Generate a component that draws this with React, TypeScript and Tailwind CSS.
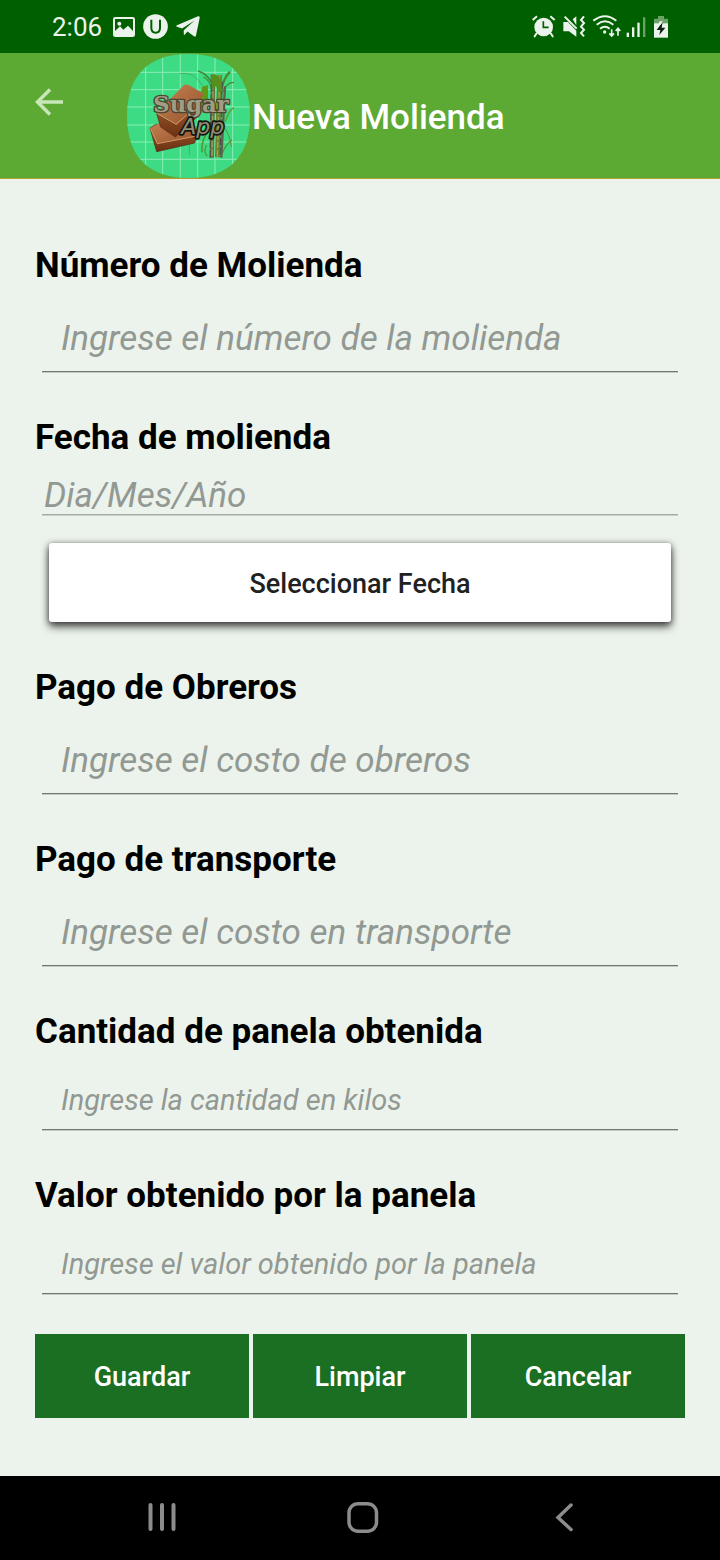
import { useState } from "react";

function SugarLogo() {
  return (
    <svg viewBox="51 27 369 372" className="h-[124px] w-[123px] shrink-0" role="img" aria-label="Sugar App">
      <defs>
        <clipPath id="squircle">
          <path d="M236 27C356 27 420 91 420 213S356 399 236 399 51 335 51 213 115 27 236 27Z" />
        </clipPath>
        <linearGradient id="panelaTop" x1="0" y1="0" x2="1" y2="1">
          <stop offset="0" stopColor="#c68354" />
          <stop offset="1" stopColor="#96522a" />
        </linearGradient>
        <linearGradient id="panelaSide" x1="0" y1="0" x2="0" y2="1">
          <stop offset="0" stopColor="#a9602f" />
          <stop offset="1" stopColor="#6a3113" />
        </linearGradient>
      </defs>
      <g clipPath="url(#squircle)">
        <rect x="51" y="27" width="369" height="372" fill="#3ddc84" />
        <path
          d="M107 27V399M158 27V399M211 27V399M263 27V399M315 27V399M368 27V399M51 82H420M51 134H420M51 186H420M51 240H420M51 291H420M51 343H420"
          stroke="#8decb6"
          strokeWidth="3"
          fill="none"
        />
        <g fill="none" stroke="#43a04c" strokeWidth="2">
          <path d="M208 86Q240 80 262 102Q284 124 292 150" />
          <path d="M238 270V330" />
          <path d="M264 78Q298 88 312 128" stroke="#3f8a36" strokeWidth="5" />
          <path d="M280 96Q300 104 306 136" stroke="#3f8a36" strokeWidth="4" />
          <path d="M360 80Q336 104 332 150" stroke="#4b8a2a" strokeWidth="7" />
          <path d="M372 112Q350 112 338 140" stroke="#4b8a2a" strokeWidth="4" />
          <path d="M372 188Q356 196 346 230" stroke="#5f9a30" strokeWidth="4" />
          <path d="M302 250Q272 280 276 322" stroke="#4f9a34" strokeWidth="5" />
          <path d="M290 300Q278 320 292 334" stroke="#4f9a34" strokeWidth="4" />
          <path d="M336 240Q362 270 364 306" stroke="#4f9a34" strokeWidth="3" />
          <path d="M366 284Q346 300 336 326" stroke="#4f9a34" strokeWidth="4" />
        </g>
        <path d="M276 126L294 120 294 160 276 206 266 180Z" fill="#5f9a16" />
        <g fill="none">
          <path d="M310 88L306 338" stroke="#66713f" strokeWidth="12" />
          <path d="M329 90L322 336" stroke="#6f8128" strokeWidth="14" />
          <path d="M345 124L334 338" stroke="#5e6048" strokeWidth="7" />
          <path d="M310 88L306 338M329 90L322 336" stroke="#9aa35e" strokeWidth="4" strokeDasharray="20 5" />
          <path d="M304 90L300 338M337 110L330 336" stroke="#4b4149" strokeWidth="3" strokeDasharray="24 4" />
        </g>
        <path d="M302 92L314 88 330 98 336 132 326 142 318 122 306 136Z" fill="#568f1e" />
        <path d="M318 168L330 180 328 206 314 196Z" fill="#78a018" />
        <path d="M134 240L120 250 140 320 254 294 262 262 210 224Z" fill="url(#panelaSide)" stroke="#552a12" strokeWidth="2" strokeLinejoin="round" />
        <path d="M120 250L164 226 262 258 250 276 142 296Z" fill="url(#panelaTop)" />
        <path d="M122 252L142 296 254 274" fill="none" stroke="#d09565" strokeWidth="3" strokeLinejoin="round" />
        <path d="M140 206L198 240 264 160 268 210 196 276 152 246Z" fill="url(#panelaSide)" stroke="#552a12" strokeWidth="2" strokeLinejoin="round" />
        <path d="M140 204L222 120Q230 116 240 122L282 146 264 178 200 240Z" fill="url(#panelaTop)" />
        <path d="M142 206L198 238 240 202" fill="none" stroke="#d09565" strokeWidth="3" strokeLinejoin="round" />
        <text
          x="243"
          y="200"
          textAnchor="middle"
          fontFamily="'DejaVu Serif', serif"
          fontWeight="700"
          fontSize="68"
          fill="#a19d85"
          stroke="#4b4630"
          strokeWidth="8"
          strokeLinejoin="round"
          paintOrder="stroke"
        >
          Sugar
        </text>
        <text
          x="278"
          y="268"
          textAnchor="middle"
          fontFamily="'DejaVu Sans', sans-serif"
          fontStyle="italic"
          fontSize="66"
          fill="#8f8c74"
          stroke="#15150f"
          strokeWidth="10"
          strokeLinejoin="round"
          paintOrder="stroke"
        >
          App
        </text>
      </g>
    </svg>
  );
}

function StatusBar() {
  return (
    <div className="flex h-[53px] items-center justify-between bg-[#006000] pr-[51px] pl-[52px] text-[#ecf3ec]">
      <div className="flex items-center">
        <span className="pt-px text-[26px] leading-8">2:06</span>
        <svg viewBox="339 51 66 60" className="ml-[11px] h-5 w-[22px]" aria-hidden="true">
          <path
            fillRule="evenodd"
            fill="currentColor"
            d="M346 51H398Q405 51 405 58V104Q405 111 398 111H346Q339 111 339 104V58Q339 51 346 51ZM345 57V93L360 79 370 89 384 77 399 93V57Z"
          />
          <circle cx="358" cy="71" r="6" fill="currentColor" />
        </svg>
        <svg viewBox="430 42 75 75" className="ml-2 h-[25px] w-[25px]" aria-hidden="true">
          <circle cx="467.500" cy="79.500" r="37" fill="currentColor" />
          <path d="M455 59V84Q455 98 468 98T481 84V59" fill="none" stroke="#006000" strokeWidth="6" />
        </svg>
        <svg viewBox="529 52 71 62" className="ml-2 h-[21px] w-6" aria-hidden="true">
          <path
            fill="currentColor"
            d="M532 79L594 53Q600 52 599 58L588 110Q586 115 581 111L563 98 554 108Q552 108 552 104V94L584 65 547 89 532 84Q527 82 532 79Z"
          />
        </svg>
      </div>
      <svg viewBox="96 42 411 75" className="h-[25px] w-[137px]" aria-hidden="true">
        <g fill="currentColor">
          <circle cx="131" cy="81" r="28" />
          <path d="M109 101L104 109M153 101L158 109" stroke="currentColor" strokeWidth="6" strokeLinecap="round" />
          <path d="M98 60L111 49M164 60L151 49" stroke="currentColor" strokeWidth="6" />
          <path d="M130 64V82H146" fill="none" stroke="#006000" strokeWidth="5" />
          <path d="M190 66H204L229 92V110L207 94H190Z" />
          <path d="M218 58L229 49V76Z" />
          <path d="M194 50L230 86" stroke="currentColor" strokeWidth="6" />
          <path d="M252 49L243 60 252 69 243 80 252 89 243 99 252 109" fill="none" stroke="currentColor" strokeWidth="6" />
          <g fill="none" stroke="currentColor" strokeWidth="6">
            <path d="M280 62Q315 35 349 62" />
            <path d="M290 74Q315 54 340 74" />
            <path d="M300 86Q315 74 329 86" />
          </g>
          <circle cx="314" cy="96" r="5" />
          <path d="M335 88V106M328 100L335 108 342 100M354 107V86M347 93L354 85 361 93" fill="none" stroke="currentColor" strokeWidth="5" />
          <rect x="380" y="98" width="7" height="13" />
          <rect x="396" y="82" width="7" height="29" />
          <rect x="412" y="68" width="7" height="43" />
          <rect x="429" y="52" width="7" height="59" opacity="0.45" />
          <path d="M474 48H492V56H504V72H462V56H474Z" opacity="0.45" />
          <rect x="462" y="70" width="42" height="43" />
          <path d="M488 65L470 90H481L478 105 496 83H485Z" fill="#0c200c" />
          <path d="M479 64H489L482 74H474Z" />
        </g>
      </svg>
    </div>
  );
}

const labelClass = "block text-[35px] leading-[50px] font-bold text-black";
const inputClass =
  "block w-full bg-transparent text-black italic outline-none placeholder:text-[#929892] placeholder:opacity-100";

function Field({ id, label, hint, small = false }: { id: string; label: string; hint: string; small?: boolean }) {
  return (
    <div>
      <label htmlFor={id} className={labelClass}>
        {label}
      </label>
      <div className="mx-[7px] border-b border-[#717671] shadow-[0_1px_0_#c4cac4]">
        <input
          id={id}
          name={id}
          placeholder={hint}
          className={
            small
              ? `${inputClass} h-[72px] pt-[14px] pl-[19px] text-[29px]`
              : `${inputClass} h-20 pt-[14px] pl-[19px] text-[35px]`
          }
        />
      </div>
    </div>
  );
}

function ActionButton({ text, type = "button" }: { text: string; type?: "button" | "submit" | "reset" }) {
  return (
    <button type={type} className="h-[84px] flex-1 bg-[#1b6f22] pt-[2px] text-[27px] font-medium text-white">
      {text}
    </button>
  );
}

export default function App() {
  const [date, setDate] = useState("");

  return (
    <div className="flex min-h-screen flex-col bg-[#ecf3ec] font-['Roboto','Noto_Sans',sans-serif]">
      <StatusBar />
      <header className="flex items-start border-b border-[#b3a032] bg-[#5ca934] pt-px">
        <button type="button" aria-label="Volver" className="mt-[32px] ml-[35px] text-[#c8e6b8]">
          <svg viewBox="0 0 28 30" className="h-[30px] w-7" fill="none" stroke="currentColor" strokeWidth="3.500">
            <path d="M28 16H3M15 3.500L2.500 16L15 28.500" />
          </svg>
        </button>
        <div className="ml-16 flex items-center">
          <SugarLogo />
          <h1 className="ml-[2px] pt-1 text-[35px] leading-12 font-medium text-white">Nueva Molienda</h1>
        </div>
      </header>
      <form
        className="flex-1 px-[35px] pt-[62px] pb-[58px]"
        onSubmit={(event) => event.preventDefault()}
        onReset={() => setDate("")}
      >
        <div className="flex flex-col gap-[41px]">
          <Field id="numero" label="Número de Molienda" hint="Ingrese el número de la molienda" />
          <div>
            <label htmlFor="fecha" className={labelClass}>
              Fecha de molienda
            </label>
            <div className="mx-[7px] border-b border-[#a4aaa4] shadow-[0_1px_0_#c8cec8]">
              <input
                id="fecha"
                name="fecha"
                readOnly
                value={date}
                placeholder="Dia/Mes/Año"
                className={`${inputClass} h-[51px] pt-4 pl-[2px] text-[35px]`}
              />
            </div>
            <div className="mt-[28px] px-[14px]">
              <button
                type="button"
                onClick={() => setDate(new Date().toLocaleDateString("es"))}
                className="h-[79px] w-full rounded-[3px] bg-white pt-1 text-[27px] font-medium text-[#212121] shadow-[0_5px_8px_rgba(0,0,0,0.6),0_1px_6px_rgba(0,0,0,0.5)]"
              >
                Seleccionar Fecha
              </button>
            </div>
          </div>
          <Field id="obreros" label="Pago de Obreros" hint="Ingrese el costo de obreros" />
          <Field id="transporte" label="Pago de transporte" hint="Ingrese el costo en transporte" />
          <Field id="cantidad" label="Cantidad de panela obtenida" hint="Ingrese la cantidad en kilos" small />
          <Field id="valor" label="Valor obtenido por la panela" hint="Ingrese el valor obtenido por la panela" small />
        </div>
        <div className="mt-10 flex gap-1">
          <ActionButton text="Guardar" type="submit" />
          <ActionButton text="Limpiar" type="reset" />
          <ActionButton text="Cancelar" />
        </div>
      </form>
      <nav className="flex h-[84px] items-center bg-black pr-[55px] pl-[61px] text-[#8c8c8c]">
        <button type="button" aria-label="Recientes" className="flex flex-1 justify-center">
          <svg viewBox="0 0 30 32" className="h-8 w-[30px]" fill="none" stroke="currentColor" strokeWidth="4" strokeLinecap="round">
            <path d="M3.500 3V27M15 3V27M26.500 3V27" />
          </svg>
        </button>
        <button type="button" aria-label="Inicio" className="flex flex-1 justify-center">
          <svg viewBox="0 0 32 32" className="h-8 w-8" fill="none" stroke="currentColor" strokeWidth="3.500">
            <rect x="2" y="1.750" width="27.500" height="27.500" rx="9" />
          </svg>
        </button>
        <button type="button" aria-label="Atrás" className="flex flex-1 justify-center">
          <svg viewBox="0 0 18 32" className="h-8 w-[18px]" fill="none" stroke="currentColor" strokeWidth="3.500" strokeLinecap="round">
            <path d="M16 3L3 15.500L16 27.500" />
          </svg>
        </button>
      </nav>
    </div>
  );
}
